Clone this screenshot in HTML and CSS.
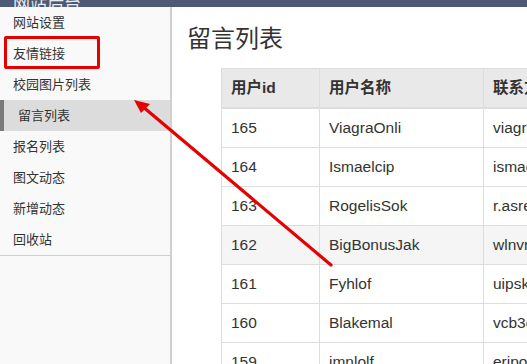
FILE: index.html
```html
<!DOCTYPE html>
<html lang="zh-CN">
<head>
<meta charset="utf-8">
<title>留言列表</title>
<link rel="stylesheet" href="styles.css">
</head>
<body>
<header class="topbar"><span class="brand">网站后台</span></header>
<div class="layout">
  <aside class="sidebar">
    <ul class="menu">
      <li class="menu-item">网站设置</li>
      <li class="menu-item">友情链接</li>
      <li class="menu-item">校园图片列表</li>
      <li class="menu-item active">留言列表</li>
      <li class="menu-item">报名列表</li>
      <li class="menu-item">图文动态</li>
      <li class="menu-item">新增动态</li>
      <li class="menu-item">回收站</li>
    </ul>
  </aside>
  <main class="main">
    <h1 class="title">留言列表</h1>
    <table class="grid">
      <colgroup><col class="c1"><col class="c2"><col class="c3"></colgroup>
      <thead>
        <tr><th>用户id</th><th>用户名称</th><th>联系方式</th></tr>
      </thead>
      <tbody>
        <tr><td>165</td><td>ViagraOnli</td><td>viagraonline@mail.com</td></tr>
        <tr><td>164</td><td>Ismaelcip</td><td>ismaelcip@mail.com</td></tr>
        <tr><td>163</td><td>RogelisSok</td><td>r.asrelisok@mail.com</td></tr>
        <tr class="hover"><td>162</td><td>BigBonusJak</td><td>wlnvnjak@mail.com</td></tr>
        <tr><td>161</td><td>Fyhlof</td><td>uipskfyh@mail.com</td></tr>
        <tr><td>160</td><td>Blakemal</td><td>vcb3cblake@mail.com</td></tr>
        <tr><td>159</td><td>imnlolf</td><td>eripolf@mail.com</td></tr>
      </tbody>
    </table>
  </main>
</div>
<div class="annot-box"></div>
<svg class="annot-arrow" width="527" height="364" viewBox="0 0 527 364">
  <line x1="331" y1="265" x2="142" y2="106" stroke="#e60000" stroke-width="3.2" stroke-linecap="round"/>
  <polygon points="134,100 150,104 141,113" fill="#e60000"/>
</svg>
</body>
</html>
```

FILE: styles.css
```css
html, body {
  margin: 0;
  padding: 0;
  height: 100%;
  overflow: hidden;
}
body {
  display: flex;
  flex-direction: column;
  font-family: "Liberation Sans", "Noto Sans CJK SC", sans-serif;
  color: #333;
  background: #fff;
  position: relative;
}
.topbar {
  height: 7px;
  flex: none;
  background: #4e5a74;
  overflow: hidden;
  display: flex;
  align-items: flex-end;
  padding-left: 13px;
}
.brand {
  color: #e8ebf0;
  font-size: 17px;
  line-height: 17px;
  flex: none;
  margin-bottom: -6px;
}
.layout {
  flex: 1;
  display: flex;
  min-height: 0;
}
.sidebar {
  width: 170px;
  flex: none;
  background: #f9f9f9;
  border-right: 2px solid #cfcfcf;
}
.menu {
  list-style: none;
  margin: 0;
  padding: 0;
  border-bottom: 1px solid #cfcfcf;
}
.menu-item {
  height: 31px;
  line-height: 31px;
  padding-left: 13px;
  font-size: 13px;
  color: #333;
}
.menu-item.active {
  background: #dcdcdc;
  border-left: 4px solid #7a7a7a;
  padding-left: 14px;
}
.main {
  flex: 1;
  min-width: 0;
  padding: 18px 0 0 15px;
  overflow: hidden;
}
.title {
  margin: 0 0 15px 0;
  font-size: 24px;
  font-weight: normal;
  line-height: 28px;
  color: #333;
}
.grid {
  margin-left: 34px;
  border-collapse: collapse;
  table-layout: fixed;
  width: 480px;
  font-size: 15.5px;
  line-height: 22px;
  white-space: nowrap;
}
.grid .c1 { width: 98px; }
.grid .c2 { width: 164px; }
.grid .c3 { width: 218px; }
.grid th, .grid td {
  border: 1px solid #dddddd;
  padding: 8px 8px 8px 9px;
  text-align: left;
  overflow: hidden;
}
.grid th {
  background: #e9e9e9;
  font-weight: bold;
  border-bottom: 2px solid #dddddd;
}
.grid tr.hover td { background: #f5f5f5; }
.annot-box {
  position: absolute;
  left: 4px;
  top: 36px;
  width: 90px;
  height: 27px;
  border: 3px solid #e60000;
  border-radius: 2px;
}
.annot-arrow {
  position: absolute;
  left: 0;
  top: 0;
  pointer-events: none;
}
```
